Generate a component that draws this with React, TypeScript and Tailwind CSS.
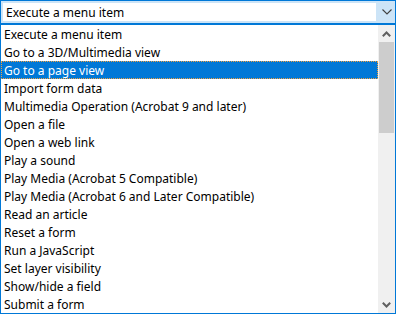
import React from "react";

const items = [
  "Execute a menu item",
  "Go to a 3D/Multimedia view",
  "Go to a page view",
  "Import form data",
  "Multimedia Operation (Acrobat 9 and later)",
  "Open a file",
  "Open a web link",
  "Play a sound",
  "Play Media (Acrobat 5 Compatible)",
  "Play Media (Acrobat 6 and Later Compatible)",
  "Read an article",
  "Reset a form",
  "Run a JavaScript",
  "Set layer visibility",
  "Show/hide a field",
  "Submit a form",
];

export default function App() {
  return (
    <div
      className="w-[396px] h-[314px] bg-white flex flex-col text-[12px] text-black"
      style={{ fontFamily: '"Noto Sans", "Segoe UI", sans-serif' }}
    >
      <div className="h-[24px] border border-[#0078d7] bg-[#cce4f7] flex">
        <div className="flex-1 m-[2px] bg-white flex items-center pl-[3px] pt-[1px] leading-none">
          Execute a menu item
        </div>
        <div className="w-[17px] flex items-center justify-center">
          <svg width="10" height="6" viewBox="0 0 10 6">
            <path d="M0.5 0.5 L5 5 L9.5 0.5" fill="none" stroke="#404040" strokeWidth="1.1" />
          </svg>
        </div>
      </div>
      <div className="flex-1 border border-[#0078d7] flex min-h-0">
        <div className="w-[377px] flex flex-col">
          {items.map((t, i) => (
            <div
              key={t}
              className={
                i === 2
                  ? "h-[18px] flex items-center pl-[2px] pt-[1px] bg-[#0078d7] text-white border border-dotted border-[#f0a040] leading-none"
                  : "h-[18px] flex items-center pl-[3px] pt-[2px] leading-none"
              }
            >
              {t}
            </div>
          ))}
        </div>
        <div className="flex-1 bg-[#f0f0f0] flex flex-col">
          <div className="h-[17px] flex items-center justify-center">
            <svg width="9" height="6" viewBox="0 0 9 6">
              <path d="M0.8 5.2 L4.5 1.5 L8.2 5.2" fill="none" stroke="#606060" strokeWidth="2" />
            </svg>
          </div>
          <div className="h-[91px] mx-[1px] bg-[#cdcdcd]" />
          <div className="flex-1" />
          <div className="h-[17px] flex items-center justify-center">
            <svg width="9" height="6" viewBox="0 0 9 6">
              <path d="M0.8 0.8 L4.5 4.5 L8.2 0.8" fill="none" stroke="#606060" strokeWidth="2" />
            </svg>
          </div>
        </div>
      </div>
    </div>
  );
}
